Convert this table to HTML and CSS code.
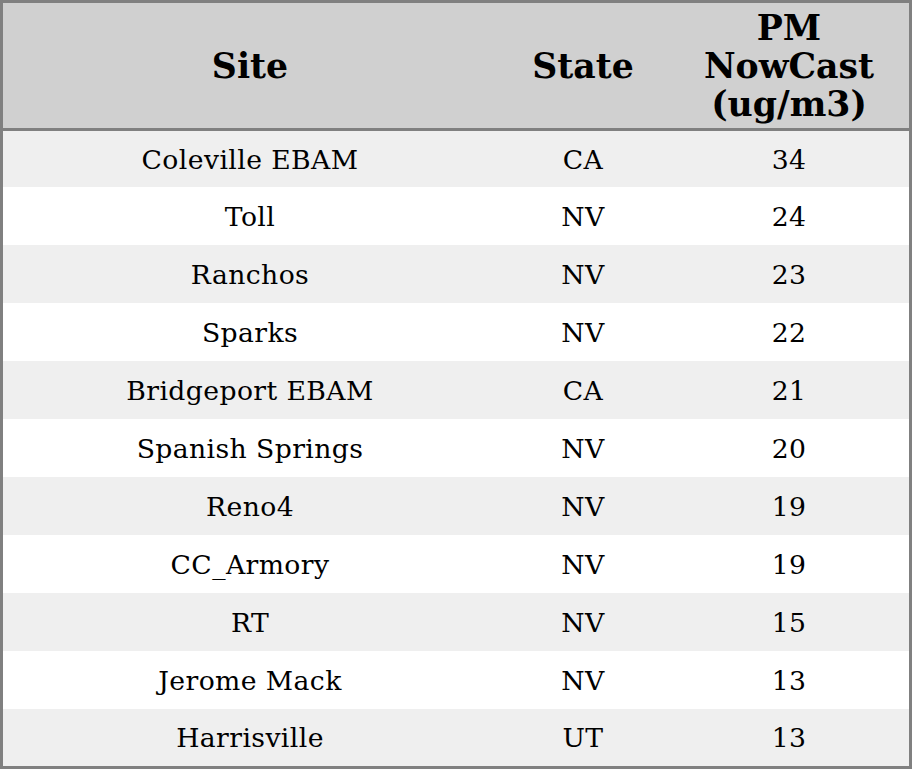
FILE: index.html
```html
<!DOCTYPE html>
<html>
<head>
<meta charset="utf-8">
<link rel="stylesheet" href="styles.css">
</head>
<body>
<table class="data">
  <colgroup>
    <col class="c-site">
    <col class="c-state">
    <col class="c-pm">
  </colgroup>
  <thead>
    <tr><th>Site</th><th>State</th><th>PM NowCast (ug/m3)</th></tr>
  </thead>
  <tbody>
    <tr class="first"><td>Coleville EBAM</td><td>CA</td><td>34</td></tr>
    <tr><td>Toll</td><td>NV</td><td>24</td></tr>
    <tr><td>Ranchos</td><td>NV</td><td>23</td></tr>
    <tr><td>Sparks</td><td>NV</td><td>22</td></tr>
    <tr><td>Bridgeport EBAM</td><td>CA</td><td>21</td></tr>
    <tr><td>Spanish Springs</td><td>NV</td><td>20</td></tr>
    <tr><td>Reno4</td><td>NV</td><td>19</td></tr>
    <tr><td>CC_Armory</td><td>NV</td><td>19</td></tr>
    <tr><td>RT</td><td>NV</td><td>15</td></tr>
    <tr><td>Jerome Mack</td><td>NV</td><td>13</td></tr>
    <tr class="last"><td>Harrisville</td><td>UT</td><td>13</td></tr>
  </tbody>
</table>
</body>
</html>
```
FILE: styles.css
```css
html, body {
  margin: 0;
  padding: 0;
  background: #ffffff;
}
.data {
  width: 912px;
  border-collapse: separate;
  border-spacing: 0;
  border: 3px solid #808080;
  table-layout: fixed;
  font-family: "DejaVu Serif", serif;
  color: #000;
}
.c-site { width: 494px; }
.c-state { width: 172px; }
.c-pm { width: 240px; }
.data th {
  background: #d0d0d0;
  height: 128px;
  padding: 0 10px;
  box-sizing: border-box;
  font-size: 34.67px;
  font-weight: bold;
  line-height: 38px;
  text-align: center;
  vertical-align: middle;
  border-bottom: 3px solid #808080;
}
.data td {
  height: 58px;
  padding: 0;
  font-size: 26.67px;
  letter-spacing: 0.4px;
  text-align: center;
  vertical-align: middle;
}
.data tbody tr:nth-child(odd) td { background: #efefef; }
.data tbody tr:nth-child(even) td { background: #ffffff; }
.data tbody tr.first td { height: 56px; }
.data tbody tr.last td { height: 57px; }
```
